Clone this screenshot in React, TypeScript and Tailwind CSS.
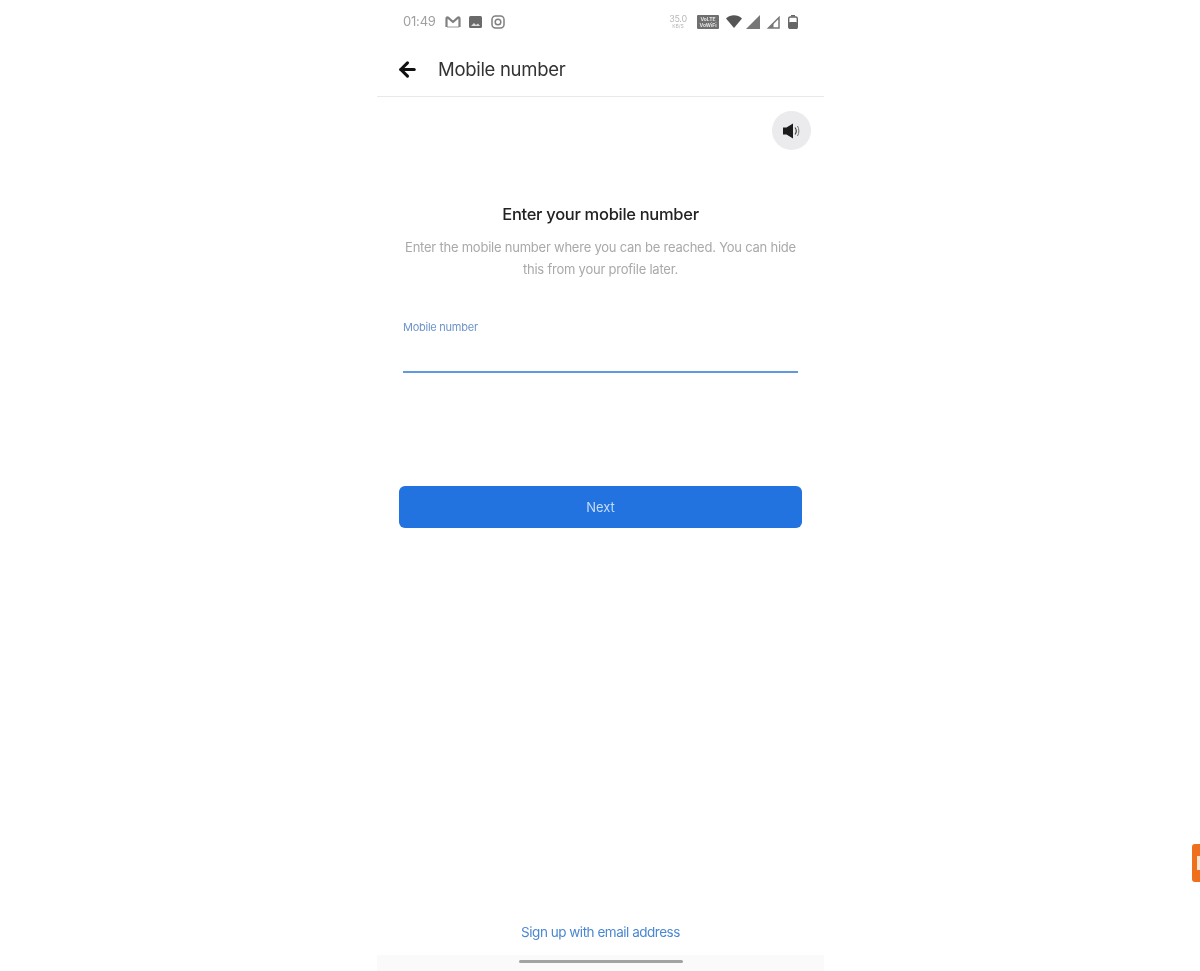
import { ArrowLeft } from "lucide-react";

const StatusBar = () => {
  return (
    <div className="flex h-[42px] items-center justify-between pl-[26px] pr-[26px] pt-[1px] text-[#8d8d8d]">
      <div className="flex items-center">
        <span className="text-[13px] tracking-[-0.2px] text-[#a0a0a0]">01:49</span>
        {/* gmail */}
        <svg className="ml-[9px]" width="16" height="12" viewBox="0 0 16 12" fill="none" stroke="#808080">
          <path d="M1.500 11V2.500a1 1 0 0 1 1.600-.8L8 6l4.900-4.300a1 1 0 0 1 1.600.8V11" strokeWidth="2.200" strokeLinejoin="round" />
          <path d="M2 11h12" strokeWidth="0.800" />
        </svg>
        {/* gallery */}
        <svg className="ml-[8px]" width="13" height="12" viewBox="0 0 13 12">
          <rect width="13" height="12" rx="1.500" fill="#6a6a6a" />
          <path d="M2 10l3-3 2 2 2-1.500 2 2.500z" fill="#ddd" />
        </svg>
        {/* instagram */}
        <svg className="ml-[9px]" width="14" height="14" viewBox="0 0 14 14" fill="none" stroke="#808080" strokeWidth="1.500">
          <rect x="1" y="1" width="12" height="12" rx="3.500" />
          <circle cx="7" cy="7" r="2.800" />
        </svg>
      </div>
      <div className="flex items-center">
        <div className="flex w-[18px] flex-col items-center leading-none text-[#b8b8b8]">
          <span className="text-[9px] leading-[8px] tracking-[-0.3px]">35.0</span>
          <span className="text-[5px] leading-[6px]">KB/S</span>
        </div>
        <div className="ml-[10px] flex h-[14px] w-[22px] flex-col items-center justify-center rounded-[1px] bg-[#6f6f6f] text-[5px] font-bold leading-[6px] text-[#e4e4e4]">
          <span>VoLTE</span>
          <span>VoWiFi</span>
        </div>
        {/* wifi */}
        <svg className="ml-[7px]" width="16" height="13" viewBox="0 0 16 13">
          <path d="M0 3.500C4.500-0.800 11.500-0.800 16 3.500L8 13z" fill="#555" />
        </svg>
        {/* signal 1 */}
        <svg className="ml-[4px]" width="14" height="14" viewBox="0 0 14 14">
          <path d="M14 0v14H0z" fill="#777" />
        </svg>
        {/* signal 2 */}
        <svg className="ml-[6px]" width="14" height="14" viewBox="0 0 14 14">
          <path d="M13 2.500V13H2.500z" fill="none" stroke="#777" strokeWidth="1.500" />
          <path d="M7.500 8v5H2.500z" fill="#777" />
        </svg>
        {/* battery */}
        <svg className="ml-[8px]" width="10" height="14" viewBox="0 0 10 14">
          <path d="M3 0h4v1.500H3z" fill="#666" />
          <rect x="0.700" y="2" width="8.600" height="11.500" rx="1.500" fill="none" stroke="#666" strokeWidth="1.400" />
          <rect x="1" y="7" width="8" height="6.500" rx="1" fill="#666" />
        </svg>
      </div>
    </div>
  );
};

const Speaker = () => {
  return (
    <svg width="20" height="18" viewBox="0 0 20 18" fill="none">
      <path d="M1 5.500h3.500L11 1.500v15L4.500 12.500H1z" fill="#1c1c1c" />
      <path d="M13 5.500c1.500 2 1.500 5 0 7" stroke="#444" strokeWidth="1.200" />
      <path d="M15.500 4c1.800 3 1.800 7 0 10" stroke="#777" strokeWidth="1" />
    </svg>
  );
};

const App = () => {
  return (
    <div className="relative flex h-[971px] w-[1200px] overflow-hidden bg-white pl-[377px] font-['Inter',sans-serif]">
      <div className="flex h-full w-[447px] flex-col blur-[0.4px]">
        <StatusBar />

        <div className="flex h-[55px] items-center border-b border-[#e9e9e9] pl-[19px]">
          <ArrowLeft size={23} strokeWidth={3.2} className="text-[#111]" />
          <span className="ml-[19px] mt-[2px] text-[18.500px] tracking-[-0.3px] text-[#333]">Mobile number</span>
        </div>

        <div className="flex justify-end pr-[13px] pt-[14px]">
          <div className="flex h-[39px] w-[39px] items-center justify-center rounded-full bg-[#ebebed]">
            <Speaker />
          </div>
        </div>

        <h1 className="mt-[52px] text-center text-[16.500px] font-medium leading-[24px] tracking-[-0.3px] text-[#222]">
          Enter your mobile number
        </h1>
        <p className="mx-auto mt-[10px] w-[400px] text-center text-[13px] leading-[22px] tracking-[-0.23px] text-[#a9a9a9]">
          Enter the mobile number where you can be reached. You can hide this from your profile later.
        </p>

        <div className="mx-[26px] mt-[39px] flex h-[54px] flex-col border-b-2 border-[#5f9ae0]">
          <span className="text-[11px] leading-[16px] tracking-[-0.25px] text-[#6d94c9]">Mobile number</span>
        </div>

        <button className="mx-[22px] mt-[113px] flex h-[42px] items-center justify-center rounded-[6px] bg-[#2272df] pt-[1px] text-[13px] text-[#c4dcf8]">
          Next
        </button>

        <a className="mt-auto text-center text-[13.500px] leading-[20px] tracking-[-0.48px] text-[#4a87d2]">
          Sign up with email address
        </a>
        <div className="mt-[13px] flex h-[16px] justify-center bg-[#fafafa] pt-[5px]">
          <div className="h-[3px] w-[164px] rounded-full bg-[#a3a3a3]" />
        </div>
      </div>

      {/* orange side tab cut off by the edge */}
      <div className="absolute bottom-[89px] right-0 h-[38px] w-[8px] rounded-l-[3px] bg-[#ee6f1c] blur-[0.4px]">
        <div className="ml-[5px] mt-[12px] h-[14px] w-[3px] bg-[#fbe3d3]" />
      </div>
    </div>
  );
};

export default App;
